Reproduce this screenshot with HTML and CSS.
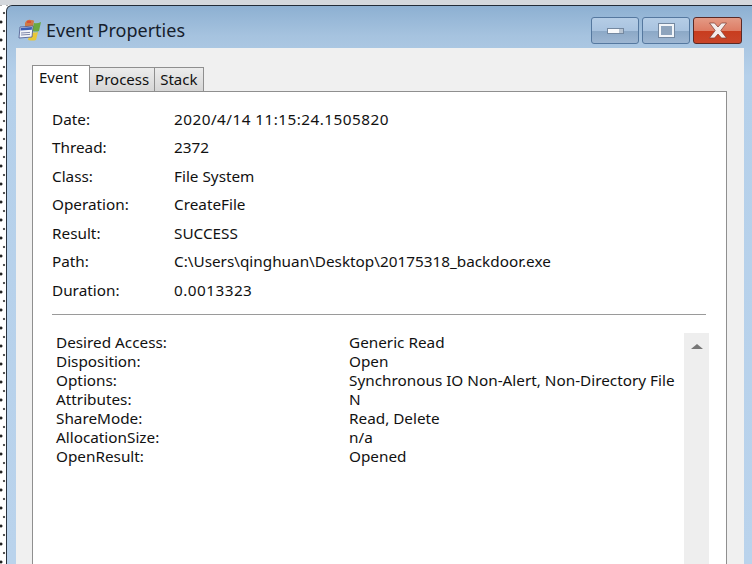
FILE: index.html
```html
<!DOCTYPE html>
<html lang="en">
<head>
<meta charset="utf-8">
<title>Event Properties</title>
<link rel="stylesheet" href="styles.css">
</head>
<body>
<div class="desktop">
  <div class="edge"></div>
  <div class="window">
    <div class="titlebar">
      <svg class="app-icon" width="24" height="24" viewBox="0 0 24 24">
        <path d="M7 5 Q9 1 13 2 Q16 2 16 3 L15 9 L7 9 Z" fill="#cf7a45"/>
        <path d="M9 3 Q11 2 13 3 L13 5 L9 5 Z" fill="#d94f35"/>
        <path d="M16 5 Q19 6 23 4 L21 13 Q18 14 14 13 Z" fill="#6aa83f"/>
        <path d="M12 14 Q16 15 20 14 L18 22 Q15 23 10 22 Z" fill="#e8c838"/>
        <path d="M2 9 L15 8 L14 19 L1 20 Z" fill="#f4f6fb" stroke="#46568c" stroke-width="0.8"/>
        <path d="M2.8 9.8 L14 9 L13.8 11.8 L2.6 12.6 Z" fill="#3a5cb4"/>
        <path d="M3 15 L12 14.4 M3 17 L12 16.4" stroke="#8088aa" stroke-width="1"/>
      </svg>
      <span class="title">Event Properties</span>
      <div class="controls">
        <div class="btn"><span class="glyph-min"></span></div>
        <div class="btn"><span class="glyph-max"></span></div>
        <div class="btn close">
          <svg width="20" height="17" viewBox="0 0 20 17"><path d="M1.5 1 L6.5 1 L10 5 L13.5 1 L18.5 1 L12.8 8.5 L18.5 16 L13.5 16 L10 12 L6.5 16 L1.5 16 L7.2 8.5 Z" fill="#f3ecec" stroke="#7a3a30" stroke-width="0.7"/></svg>
        </div>
      </div>
    </div>
    <div class="client">
      <div class="tabs">
        <div class="tab active">Event</div>
        <div class="tab">Process</div>
        <div class="tab last">Stack</div>
      </div>
      <div class="panel">
        <dl class="fields">
          <dt>Date:</dt><dd class="num">2020/4/14 11:15:24.1505820</dd>
          <dt>Thread:</dt><dd>2372</dd>
          <dt>Class:</dt><dd>File System</dd>
          <dt>Operation:</dt><dd>CreateFile</dd>
          <dt>Result:</dt><dd>SUCCESS</dd>
          <dt>Path:</dt><dd>C:\Users\qinghuan\Desktop\20175318_backdoor.exe</dd>
          <dt>Duration:</dt><dd class="num">0.0013323</dd>
        </dl>
        <div class="rule"></div>
        <div class="detail">
          <dl class="details">
            <dt>Desired Access:</dt><dd>Generic Read</dd>
            <dt>Disposition:</dt><dd>Open</dd>
            <dt>Options:</dt><dd>Synchronous IO Non-Alert, Non-Directory File</dd>
            <dt>Attributes:</dt><dd>N</dd>
            <dt>ShareMode:</dt><dd>Read, Delete</dd>
            <dt>AllocationSize:</dt><dd>n/a</dd>
            <dt>OpenResult:</dt><dd>Opened</dd>
          </dl>
          <div class="scrollbar"><span class="arrow-up"></span></div>
        </div>
      </div>
    </div>
  </div>
</div>
</body>
</html>
```

FILE: styles.css
```css
* { box-sizing: border-box; }
html, body { margin: 0; padding: 0; }
body { width: 752px; height: 564px; overflow: hidden; font-family: "Noto Sans", sans-serif; color: #111; }
dl, dd, dt { margin: 0; }

.desktop {
  width: 752px; height: 564px; overflow: hidden; display: flex; flex-direction: column;
  background-color: #fff;
  background-image:
    radial-gradient(circle at 1px 4px, #222 1.2px, transparent 1.8px),
    radial-gradient(circle at 4px 13px, #555 1px, transparent 1.6px);
  background-size: 6px 18px;
}
.edge { height: 5px; flex: none; background: #d4d8dd; }
.window {
  flex: 1; margin-left: 6px; min-height: 0; display: flex; flex-direction: column;
  border-top: 1px solid #222c38; border-left: 1px solid #2a3440; border-top-left-radius: 6px;
  background: linear-gradient(180deg, #8db0d2 0, #a6c3df 30px, #b5d0ea 70px, #bad3ec 100%);
}
.titlebar { height: 42px; flex: none; display: flex; align-items: center; padding-left: 11px; }
.app-icon { flex: none; margin-right: 4px; margin-top: 6px; }
.title { font-size: 18px; color: #16202c; margin-top: 6px; }
.controls { margin-left: auto; display: flex; gap: 3px; align-self: flex-start; margin-top: 11px; margin-right: 10px; }
.btn {
  width: 48px; height: 27px; display: flex; align-items: center; justify-content: center;
  border: 1px solid #55789f; border-radius: 3px;
  background: linear-gradient(180deg, #b5cde6 0, #a9c3df 50%, #8ba8c6 52%, #9db6d2 100%);
}
.close { width: 49px; border-color: #5a2a26; background: linear-gradient(180deg, #e49a85 0, #dd7d65 50%, #c83c1e 52%, #c9452a 100%); }
.glyph-min { width: 17px; height: 6px; background: linear-gradient(90deg, #f8f9fb 75%, #b8c4d2 75%); border: 1px solid #7488a0; }
.glyph-max { width: 17px; height: 15px; background: #8ea4bd; border: 3px solid #f2f5f9; outline: 1px solid #7488a0; outline-offset: -1px; }

.client { flex: 1; min-height: 0; margin-left: 9px; margin-right: 8px; background: #f0f0f0; padding: 18px 17px 0 16px; display: flex; flex-direction: column; }
.tabs { display: flex; flex: none; height: 25px; align-items: flex-end; position: relative; z-index: 1; }
.tab {
  font-size: 15px; height: 24px; padding: 0 5px; line-height: 23px; border: 1px solid #8f8f8f; border-bottom: none;
  margin-right: -1px; background: linear-gradient(180deg, #ececec, #d6d6d6);
}
.tab.active { height: 27px; background: #fff; padding: 0 11px 0 6px; margin-bottom: -1px; line-height: 23px; }
.tab.last { padding: 0 6px 0 5px; }
.panel { flex: 1; min-height: 0; background: #fff; border: 1px solid #8f8f8f; border-bottom: none; padding: 12.6px 19px 0 19px; }
.fields { display: grid; grid-template-columns: 122px 1fr; grid-auto-rows: 28.5px; font-size: 15.3px; line-height: 28px; height: 200px; }
.num { letter-spacing: 0.47px; }
.rule { height: 1px; background: #9a9a9a; margin-top: 9.4px; margin-right: 1px; }
.detail { display: flex; margin-top: 18px; margin-left: 4px; }
.details { flex: 1; display: grid; grid-template-columns: 293px 1fr; grid-auto-rows: 19px; font-size: 15.3px; line-height: 19px; align-content: start; }
.scrollbar { width: 25px; height: 300px; flex: none; background: #eeeeee; display: flex; justify-content: center; padding-top: 11px; margin-right: -2px; }
.arrow-up { width: 0; height: 0; border-left: 6px solid transparent; border-right: 6px solid transparent; border-bottom: 5px solid #777; }
```
